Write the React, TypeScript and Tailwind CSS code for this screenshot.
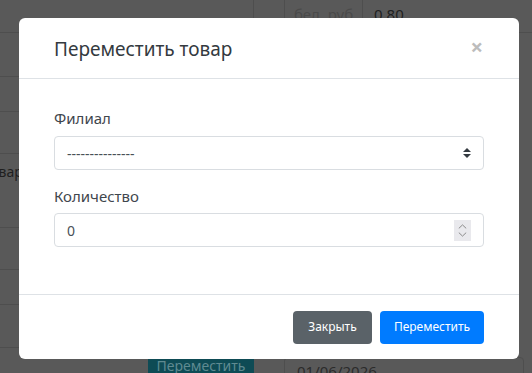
import React from 'react'

const font = { fontFamily: '"Segoe UI", "Noto Sans", "Open Sans", sans-serif' }

function BackgroundPage() {
  const leftRows = [33, 44, 35, 42, 74, 42, 35, 43]
  return (
    <div className="absolute inset-0 bg-[#595959] overflow-hidden">
      <div className="flex h-full">
        <div className="w-[253px] flex flex-col">
          {leftRows.map((h, i) => (
            <div key={i} style={{ height: h }} className="border-b border-[#4e4e4e] flex items-start">
              {i === 4 && <span className="text-[14px] leading-[20px] text-[#1f1f1f] -ml-[17px] mt-[8px] whitespace-nowrap">Товар</span>}
            </div>
          ))}
        </div>
        <div className="w-[31px] border-l border-[#4e4e4e]" />
        <div className="flex-1 flex flex-col">
          <div className="h-[33px] flex border-b border-[#4e4e4e]">
            <div className="w-[79px] border-l border-r border-[#4e4e4e] flex items-start justify-center pt-[7px]">
              <span className="text-[15px] text-[#4a4a4a] leading-none">бел. руб</span>
            </div>
            <div className="pl-[11px] flex items-start pt-[7px]">
              <span className="text-[15px] text-[#1f1f1f] leading-none">0.80</span>
            </div>
          </div>
        </div>
      </div>
      <div className="absolute left-[148px] top-[357px] w-[106px] h-[20px] bg-[#0e4b55] flex justify-center">
        <span className="text-[14px] text-[#5f8a91] leading-[18px]">Переместить</span>
      </div>
      <div className="absolute left-[284px] top-[357px] w-[240px] h-[20px] border border-[#4e4e4e] rounded-[4px] pl-[12px]">
        <span className="text-[15px] text-[#2b2b2b] leading-[26px]">01/06/2026</span>
      </div>
    </div>
  )
}

function SelectArrows() {
  return (
    <svg width="8" height="10" viewBox="0 0 4 5">
      <path d="M2 0L0 2h4zm0 5L0 3h4z" fill="#343a40" />
    </svg>
  )
}

function Spinner() {
  return (
    <div className="w-[17px] h-[21px] bg-[#e9e9ed] flex flex-col items-center justify-center gap-[3px]">
      <svg width="9" height="5" viewBox="0 0 9 5">
        <path d="M0.8 4.4L4.5 0.9L8.2 4.4" stroke="#8a8a8a" strokeWidth="1" fill="none" />
      </svg>
      <svg width="9" height="5" viewBox="0 0 9 5">
        <path d="M0.8 0.6L4.5 4.1L8.2 0.6" stroke="#8a8a8a" strokeWidth="1" fill="none" />
      </svg>
    </div>
  )
}

export default function App() {
  return (
    <div className="relative w-[532px] h-[373px] overflow-hidden" style={font}>
      <BackgroundPage />
      <div className="absolute left-[19px] top-[18px] w-[500px] h-[341px] bg-white rounded-[6px] flex flex-col">
        <div className="h-[61px] px-[35px] flex items-center justify-between border-b border-[#dee2e6]">
          <h5 className="text-[19px] leading-[24px] text-[#343a40] pt-[1px]">Переместить товар</h5>
          <span className="text-[22px] font-bold leading-none text-[#bcbcbc] -mt-[4px] mr-[1px]">×</span>
        </div>
        <div className="flex-1 px-[35px] pt-[27px]">
          <label className="block text-[15px] leading-[24px] text-[#3f464d] mb-[6px]">Филиал</label>
          <div className="h-[34px] border border-[#d9dde1] rounded-[4px] flex items-center justify-between pl-[12px] pr-[12px]">
            <span className="text-[14px] text-[#495057]">---------------</span>
            <SelectArrows />
          </div>
          <label className="block text-[15px] leading-[24px] text-[#3f464d] mt-[14px] mb-[5px]">Количество</label>
          <div className="h-[34px] border border-[#d9dde1] rounded-[4px] flex items-center justify-between pl-[12px] pr-[12px]">
            <span className="text-[14px] text-[#495057]">0</span>
            <Spinner />
          </div>
        </div>
        <div className="h-[65px] px-[35px] border-t border-[#dee2e6] flex items-center justify-end gap-[8px]">
          <button className="h-[33px] w-[79px] rounded-[4px] bg-[#5a6268] text-white text-[12px]">Закрыть</button>
          <button className="h-[33px] w-[104px] rounded-[4px] bg-[#007bff] text-white text-[12px]">Переместить</button>
        </div>
      </div>
    </div>
  )
}
